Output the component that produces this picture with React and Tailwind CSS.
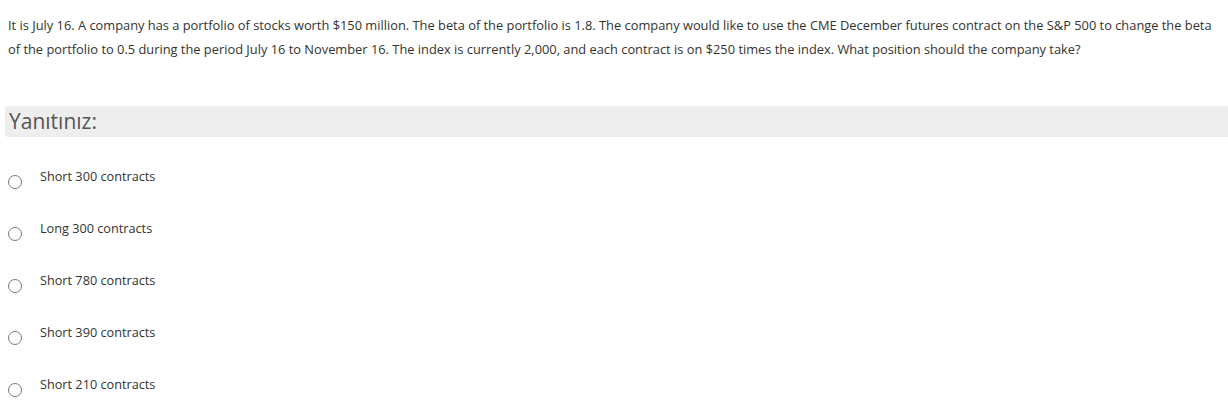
export default function App() {
  const options = [
    "Short 300 contracts",
    "Long 300 contracts",
    "Short 780 contracts",
    "Short 390 contracts",
    "Short 210 contracts",
  ];
  return (
    <div className="bg-white w-[1228px] h-[415px] text-[#333] font-['Open_Sans',sans-serif] overflow-hidden">
      <div className="pt-[13px] pl-[8px] pr-[10px] text-[12.85px] leading-[24px]">
        It is July 16. A company has a portfolio of stocks worth $150 million. The beta of the portfolio is 1.8. The company would like to use the CME December futures contract on the S&amp;P 500 to change the beta of the portfolio to 0.5 during the period July 16 to November 16. The index is currently 2,000, and each contract is on $250 times the index. What position should the company take?
      </div>
      <div className="mt-[45px] ml-[5px] h-[31px] bg-[#eeeeee] rounded-l-[3px] flex items-center pl-[4px]">
        <span className="text-[21px] text-[#555] leading-none">Yanıtınız:</span>
      </div>
      <div className="mt-[31px]">
        {options.map((o) => (
          <label key={o} className="flex items-start h-[52px] pl-[8px]">
            <span className="mt-[7px] w-[14px] h-[14px] rounded-full border border-[#7a7a7a] bg-white shrink-0"></span>
            <span className="ml-[18px] text-[12.7px] leading-[16px] text-[#333]">{o}</span>
          </label>
        ))}
      </div>
    </div>
  );
}
